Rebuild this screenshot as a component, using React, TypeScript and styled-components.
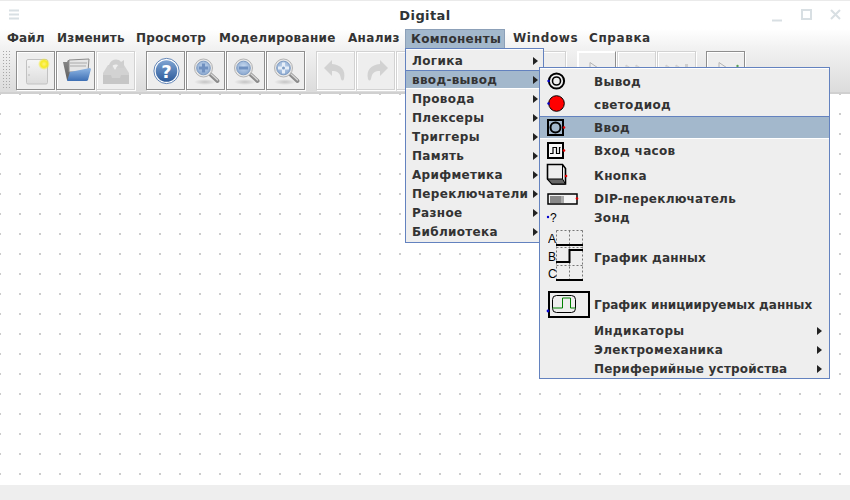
import React from "react";
import styled, { createGlobalStyle } from "styled-components";

const Global = createGlobalStyle`
  html, body { margin: 0; padding: 0; background: #fff; }
  #root { width: 850px; height: 500px; overflow: hidden; }
`;

const Frame = styled.div`
  position: relative;
  width: 850px;
  height: 500px;
  display: flex;
  flex-direction: column;
  overflow: hidden;
  background: #fff;
  font-family: "DejaVu Sans", sans-serif;
  font-weight: 700;
  font-size: 12px;
  letter-spacing: 0.32px;
  white-space: nowrap;
  color: #333;
`;

const TitleBar = styled.div`
  position: relative;
  height: 29px;
  flex: none;
  display: flex;
  align-items: center;
  justify-content: center;
  padding-top: 1px;
  box-sizing: border-box;
  border-top: 1px solid #eaeaea;
  font-size: 13px;
  letter-spacing: 0.4px;
  color: #2e3436;
`;

const WinIcon = styled.svg<{ $left: number }>`
  position: absolute;
  top: 7px;
  left: ${(p) => p.$left}px;
`;

const MenuBar = styled.div`
  height: 20px;
  flex: none;
  display: flex;
  padding-left: 1px;
  background: linear-gradient(#ffffff, #f1f1f1);
`;

const TopMenu = styled.div<{ $open?: boolean; $w: number }>`
  width: ${(p) => p.$w}px;
  box-sizing: border-box;
  display: flex;
  align-items: center;
  padding-left: 6px;
  line-height: 17px;
  height: 19px;
  ${(p) => p.$open && `background:#a3b8cc; border:1px solid #8ca0b8; border-bottom:none; padding-left:5px; margin-right:2px;`}
`;

const Label = styled.span<{ $track?: number }>`
  letter-spacing: ${(p) => p.$track ?? 0.32}px;
`;

const ToolBar = styled.div`
  height: 45px;
  flex: none;
  display: flex;
  align-items: flex-start;
  padding: 2px 0 0 3px;
  box-sizing: border-box;
  background: linear-gradient(#f1f1f1, #dcdcdc);
  border-bottom: 2px solid #d0d0d0;
`;

const Grip = styled.div`
  width: 9px;
  height: 39px;
  margin-right: 4px;
  background-image: conic-gradient(at 1px 1px, transparent 0 75%, #a8a8a8 75% 100%);
  background-size: 3px 3px;
`;

const ToolButton = styled.div<{ $off?: boolean; $gap?: number; $raised?: boolean }>`
  width: 39px;
  height: 39px;
  flex: none;
  box-sizing: border-box;
  margin-right: 1px;
  margin-left: ${(p) => p.$gap ?? 0}px;
  display: flex;
  align-items: center;
  justify-content: center;
  background: #eeeeee;
  border: 1px solid ${(p) => (p.$off ? "#d2d2d2" : "#8e8e8e")};
  box-shadow: inset 1px 1px 0 #fff, 1px 1px 0 #fff;
  ${(p) => p.$raised && `border-color:#fff #8e8e8e #8e8e8e #fff;`}
`;

const Canvas = styled.div`
  flex: 1;
  background-color: #fff;
  background-image: conic-gradient(at 2px 2px, transparent 0 75%, #cccccc 75% 100%);
  background-size: 20px 20px;
  background-position: 19px -1px;
`;

const StatusBar = styled.div`
  height: 15px;
  flex: none;
  background: #eeeeee;
`;

const Popup = styled.div<{ $x: number; $y: number; $w: number; $pb?: number }>`
  position: absolute;
  left: ${(p) => p.$x}px;
  top: ${(p) => p.$y}px;
  width: ${(p) => p.$w}px;
  box-sizing: border-box;
  padding: 2px 0 ${(p) => p.$pb ?? 0}px;
  background: #eeeeee;
  border: 1px solid #6382bf;
  box-shadow: inset 0 1px 0 #fff;
  display: flex;
  flex-direction: column;
`;

const SimpleRow = styled.div<{ $on?: boolean }>`
  position: relative;
  height: 19px;
  box-sizing: border-box;
  display: flex;
  align-items: center;
  padding-left: 6px;
  ${(p) => p.$on && `background:#a3b8cc; border-top:1px solid #6382bf; border-bottom:1px solid #fff;`}
`;

const IconRow = styled.div<{ $h: number; $on?: boolean }>`
  position: relative;
  height: ${(p) => p.$h}px;
  box-sizing: border-box;
  display: flex;
  align-items: center;
  padding-left: 54px;
  ${(p) => p.$on && `background:#a3b8cc; border-top:1px solid #6382bf; border-bottom:1px solid #fff;`}
`;

const IconSlot = styled.div<{ $top: number; $left?: number }>`
  position: absolute;
  left: ${(p) => p.$left ?? 4}px;
  top: ${(p) => p.$top}px;
  display: flex;
`;

const Arrow = styled.span<{ $right: number }>`
  position: absolute;
  right: ${(p) => p.$right}px;
  top: 50%;
  margin-top: -4px;
  width: 0;
  height: 0;
  border-left: 5px solid #222;
  border-top: 4px solid transparent;
  border-bottom: 4px solid transparent;
`;

const Closer = styled.svg`
  display: block;
`;

const grad = (id: string, a: string, b: string) => (
  <linearGradient id={id} x1="0" y1="0" x2="0" y2="1">
    <stop offset="0" stopColor={a} />
    <stop offset="1" stopColor={b} />
  </linearGradient>
);

const NewIcon = () => (
  <svg width="30" height="30" viewBox="0 0 30 30">
    <defs>
      {grad("pg", "#f6f6f6", "#dcdcdc")}
      <radialGradient id="sun">
        <stop offset="0" stopColor="#fff27a" />
        <stop offset="0.55" stopColor="#f5ea20" />
        <stop offset="1" stopColor="#f5ea20" stopOpacity="0" />
      </radialGradient>
    </defs>
    <rect x="5.5" y="3.5" width="21" height="24.5" rx="1.5" fill="url(#pg)" stroke="#c2c2c2" />
    <circle cx="8" cy="11" r="0.7" fill="#aaa" />
    <circle cx="8" cy="19" r="0.7" fill="#aaa" />
    <circle cx="23" cy="8" r="6" fill="url(#sun)" />
  </svg>
);

const OpenIcon = () => (
  <svg width="32" height="30" viewBox="0 0 32 30">
    <defs>
      {grad("fb", "#8fb6e4", "#3d6fb4")}
      {grad("fk", "#8a8a8a", "#5e5e5e")}
    </defs>
    <path d="M3 6h4l1-2h4v20H7z" fill="url(#fk)" />
    <path d="M9 4l20-1-1 13H9z" fill="#e6e6e6" stroke="#8c8c8c" />
    <path d="M10 7h17M10 10h16" stroke="#aaa" />
    <path d="M10 16l20-4 1 1-3 11a2 2 0 0 1-2 1H7z" fill="url(#fb)" />
  </svg>
);

const SaveIcon = () => (
  <svg width="30" height="30" viewBox="0 0 30 30">
    <path d="M2 17l5-8h4l3 5 3-5h6l5 8v11H2z" fill="#d2d2d2" />
    <path d="M2 19h8l1 3h8l1-3h8v9H2z" fill="#c6c6c6" />
    <path d="M8 9c2-6 9-7 12-3l3-2v8h-8l3-2c-2-2-6-2-7 1l-1 3z" fill="#cfcfcf" />
  </svg>
);

const HelpIcon = () => (
  <svg width="28" height="28" viewBox="0 0 28 28">
    <defs>
      {grad("hb", "#7fa4d2", "#2c5a9a")}
    </defs>
    <circle cx="14.5" cy="14" r="12.6" fill="#fff" stroke="#5f83b5" />
    <circle cx="14.5" cy="14" r="10.8" fill="url(#hb)" />
    <text x="14.5" y="20.5" textAnchor="middle" fontSize="18" fontWeight="700" fontFamily="DejaVu Sans" fill="#fff" letterSpacing="0">?</text>
  </svg>
);

const Zoom = ({ kind, id }: { kind: "in" | "out" | "fit"; id: string }) => (
  <svg width="32" height="32" viewBox="0 0 32 32">
    <defs>
      <radialGradient id={id} cx="0.5" cy="0.4" r="0.7">
        <stop offset="0" stopColor="#c8daf0" />
        <stop offset="1" stopColor="#7f9fca" />
      </radialGradient>
      <radialGradient id={id + "s"}>
        <stop offset="0" stopColor="#c4c4c4" />
        <stop offset="1" stopColor="#c4c4c4" stopOpacity="0" />
      </radialGradient>
    </defs>
    <ellipse cx="15" cy="27" rx="11" ry="3" fill={`url(#${id}s)`} />
    <path d="M20 19l7.5 7" stroke="#8c8c8c" strokeWidth="4" strokeLinecap="round" />
    <path d="M21 19l6.5 6" stroke="#d6d6d6" strokeWidth="1.4" strokeLinecap="round" />
    <circle cx="13.5" cy="13" r="9" fill="#e6e6e6" stroke="#b4b4b4" />
    <circle cx="13.5" cy="13" r="6.8" fill={`url(#${id})`} stroke="#7f9dc4" />
    {kind === "in" && <path d="M13.5 8.5v9M9 13h9" stroke="#6f90c0" strokeWidth="3.2" />}
    {kind === "out" && <path d="M9 13h9" stroke="#6f90c0" strokeWidth="3" />}
    {kind === "fit" && (
      <>
        <path d="M13.5 7.5v11M8 13h11" stroke="#e6eef8" strokeWidth="3" />
        <circle cx="13.5" cy="13" r="1.5" fill="#7f9dc4" />
      </>
    )}
  </svg>
);

const UndoIcon = ({ flip }: { flip?: boolean }) => (
  <svg width="28" height="30" viewBox="0 0 28 30" style={flip ? { transform: "scaleX(-1)" } : undefined}>
    <path d="M10 4L2 12l8 8v-5c5 0 8 1 9 8 1 2 2 2 3 0 2-9-3-14-12-15z" fill="#d2d2d2" />
  </svg>
);

const PlayIcon = ({ bars = 0, green }: { bars?: number; green?: boolean }) => (
  <svg width="30" height="30" viewBox="0 0 30 30">
    {bars === 0 && <path d="M8 6.5L25 18H8z" fill="#eeeeee" stroke="#b4b4b4" />}
    {bars > 0 && <path d="M4 9l6 4H4zM14 9l6 4h-6z" fill="#dcdcdc" stroke="#cfcfcf" />}
    {bars > 1 && <path d="M23 8h3v5h-3z" fill="#cfcfcf" />}
    {green && <circle cx="26.5" cy="10" r="1.2" fill="#5aa05a" />}
  </svg>
);

const OutputIc = () => (
  <Closer width="24" height="20" viewBox="0 0 24 20">
    <circle cx="12.5" cy="10" r="7.6" fill="none" stroke="#000" strokeWidth="2" />
    <circle cx="12.5" cy="10" r="4" fill="none" stroke="#000" strokeWidth="1.6" />
    <circle cx="4.6" cy="10" r="1.3" fill="#0000cc" />
  </Closer>
);

const LedIc = () => (
  <Closer width="24" height="20" viewBox="0 0 24 20">
    <circle cx="12.5" cy="9.5" r="7.8" fill="#ff0000" stroke="#000" />
    <circle cx="4.6" cy="9.5" r="1.3" fill="#0000cc" />
  </Closer>
);

const InputIc = () => (
  <Closer width="20" height="20" viewBox="0 0 20 20">
    <rect x="2" y="3" width="15" height="15" fill="none" stroke="#000" strokeWidth="2" />
    <circle cx="9.5" cy="10.5" r="5" fill="none" stroke="#000" strokeWidth="2" />
    <circle cx="18" cy="10.5" r="1.3" fill="#e00000" />
  </Closer>
);

const ClockIc = () => (
  <Closer width="20" height="20" viewBox="0 0 20 20">
    <rect x="2" y="3" width="15" height="15" fill="#f8f8f8" stroke="#000" strokeWidth="2" />
    <path d="M4 13.5h3V7.5h3.5v6h3V7.5h1" fill="none" stroke="#000" strokeWidth="1.2" />
    <circle cx="18" cy="10.5" r="1.3" fill="#e00000" />
  </Closer>
);

const ButtonIc = () => (
  <Closer width="24" height="24" viewBox="0 0 24 24">
    <path d="M1.5 2.5h15l3 4v15.5H6l-4.5-5z" fill="#eee" stroke="#000" strokeWidth="1.6" />
    <path d="M1.5 17h15l3 5H6z" fill="#666" stroke="#000" />
    <path d="M16.5 2.5V17" fill="none" stroke="#000" />
    <circle cx="20" cy="14" r="1.3" fill="#e00000" />
  </Closer>
);

const DipIc = () => (
  <Closer width="34" height="16" viewBox="0 0 34 16">
    <rect x="2" y="4" width="29" height="10" fill="#f4f4f4" stroke="#000" strokeWidth="1.5" />
    <rect x="4" y="6" width="11" height="7" fill="#888" />
    <rect x="15" y="6" width="3" height="7" fill="#aaa" />
    <circle cx="31" cy="8.5" r="1.3" fill="#e00000" />
  </Closer>
);

const ProbeIc = () => (
  <Closer width="16" height="14" viewBox="0 0 16 14">
    <circle cx="2" cy="6" r="1.2" fill="#0000cc" />
    <text x="4" y="11" fontSize="12" fontFamily="Liberation Sans" fontWeight="400" fill="#000" letterSpacing="0">?</text>
  </Closer>
);

const Letter = styled.text`
  font-family: "Liberation Sans", sans-serif;
  font-weight: 400;
  font-size: 12px;
  letter-spacing: 0;
  fill: #000;
`;

const ChartIc = () => (
  <Closer width="40" height="54" viewBox="0 0 40 54">
    <g stroke="#777" strokeDasharray="2 2" fill="none">
      <path d="M8.5 .5h26M8.5 35.5h26M8.5 17.5h26M8.5 .5v50M21.5 .5v50M34.5 .5v50" />
    </g>
    <path d="M8 15h27M8 32h13.5V20H35M8 50h27" fill="none" stroke="#000" strokeWidth="2" />
    <Letter x="0" y="13">A</Letter>
    <Letter x="0" y="31">B</Letter>
    <Letter x="0" y="48">C</Letter>
  </Closer>
);

const TriggerIc = () => (
  <Closer width="46" height="30" viewBox="0 0 46 30">
    <rect x="4" y="2" width="40" height="25" fill="none" stroke="#000" strokeWidth="2" />
    <rect x="7.5" y="5.5" width="23" height="17" rx="4" fill="#eee" stroke="#000" />
    <path d="M7.5 18h10V8h8v10h5" fill="none" stroke="#008000" />
    <circle cx="3" cy="21" r="1.4" fill="#0000cc" />
  </Closer>
);

type It = { label: string; h: number; icon?: React.ReactNode; top?: number; left?: number; on?: boolean; arrow?: boolean; track?: number };

const subItems: It[] = [
  { label: "Вывод", h: 23, icon: <OutputIc />, top: 1 },
  { label: "светодиод", h: 23, icon: <LedIc />, top: 1 },
  { label: "Ввод", h: 23, icon: <InputIc />, top: 0, left: 6, on: true },
  { label: "Вход часов", h: 23, icon: <ClockIc />, top: 1, left: 6 },
  { label: "Кнопка", h: 27, icon: <ButtonIc />, top: 0, left: 6 },
  { label: "DIP-переключатель", h: 19, icon: <DipIc />, top: 1, left: 6, track: 0.26 },
  { label: "Зонд", h: 19, icon: <ProbeIc />, top: 3, left: 6 },
  { label: "График данных", h: 61, icon: <ChartIc />, top: 3, left: 8, track: 0.16 },
  { label: "График инициируемых данных", h: 33, icon: <TriggerIc />, top: 2, left: 5, track: 0.01 },
  { label: "Индикаторы", h: 19, arrow: true },
  { label: "Электромеханика", h: 19, arrow: true },
  { label: "Периферийные устройства", h: 19, arrow: true, track: 0.19 },
];

const mainItems = ["Логика", "ввод-вывод", "Провода", "Плексеры", "Триггеры", "Память", "Арифметика", "Переключатели", "Разное", "Библиотека"];

const tops: [string, number, boolean?, number?][] = [
  ["Файл", 50, false, 0.1],
  ["Изменить", 79, false, 0.2],
  ["Просмотр", 83],
  ["Моделирование", 129],
  ["Анализ", 63],
  ["Компоненты", 100, true],
  ["Windows", 76, false, 0.6],
  ["Справка", 70, false, 0.6],
];

export default function App() {
  return (
    <Frame>
      <Global />
      <TitleBar>
        <WinIcon $left={9} width="11" height="13" viewBox="0 0 11 13">
          <path d="M0 2.5h10M0 6.5h10M0 10.5h10" stroke="#d8dfe3" strokeWidth="2" />
        </WinIcon>
        Digital
        <WinIcon $left={771} width="12" height="14" viewBox="0 0 12 14">
          <path d="M1 12.5h10" stroke="#d8dfe3" strokeWidth="2" />
        </WinIcon>
        <WinIcon $left={801} width="12" height="14" viewBox="0 0 12 14">
          <rect x="1" y="2" width="9" height="9" fill="none" stroke="#d8dfe3" strokeWidth="2" />
        </WinIcon>
        <WinIcon $left={830} width="12" height="14" viewBox="0 0 12 14">
          <path d="M1 2l9 9M10 2l-9 9" stroke="#d8dfe3" strokeWidth="2" />
        </WinIcon>
      </TitleBar>
      <MenuBar>
        {tops.map(([t, w, o, k]) => (
          <TopMenu key={t} $w={w} $open={o}><Label $track={k}>{t}</Label></TopMenu>
        ))}
      </MenuBar>
      <ToolBar>
        <Grip />
        <ToolButton><NewIcon /></ToolButton>
        <ToolButton><OpenIcon /></ToolButton>
        <ToolButton $off><SaveIcon /></ToolButton>
        <ToolButton $gap={10}><HelpIcon /></ToolButton>
        <ToolButton><Zoom kind="in" id="z1" /></ToolButton>
        <ToolButton><Zoom kind="out" id="z2" /></ToolButton>
        <ToolButton><Zoom kind="fit" id="z3" /></ToolButton>
        <ToolButton $off $gap={10}><UndoIcon /></ToolButton>
        <ToolButton $off><UndoIcon flip /></ToolButton>
        <ToolButton $off />
        <ToolButton $off />
        <ToolButton $off />
        <ToolButton $off $gap={11} />
        <ToolButton $gap={10} $raised><PlayIcon /></ToolButton>
        <ToolButton $off><PlayIcon bars={1} /></ToolButton>
        <ToolButton $off><PlayIcon bars={2} /></ToolButton>
        <ToolButton $gap={9}><PlayIcon green /></ToolButton>
      </ToolBar>
      <Canvas />
      <StatusBar />
      <Popup $x={405} $y={48} $w={139} $pb={1}>
        {mainItems.map((m, i) => (
          <SimpleRow key={m} $on={i === 1}>
            {m}
            <Arrow $right={5} />
          </SimpleRow>
        ))}
      </Popup>
      <Popup $x={539} $y={67} $w={291}>
        {subItems.map((s) => (
          <IconRow key={s.label} $h={s.h} $on={s.on}>
            {s.icon && <IconSlot $top={s.top ?? 0} $left={s.left}>{s.icon}</IconSlot>}
            <Label $track={s.track}>{s.label}</Label>
            {s.arrow && <Arrow $right={7} />}
          </IconRow>
        ))}
      </Popup>
    </Frame>
  );
}
